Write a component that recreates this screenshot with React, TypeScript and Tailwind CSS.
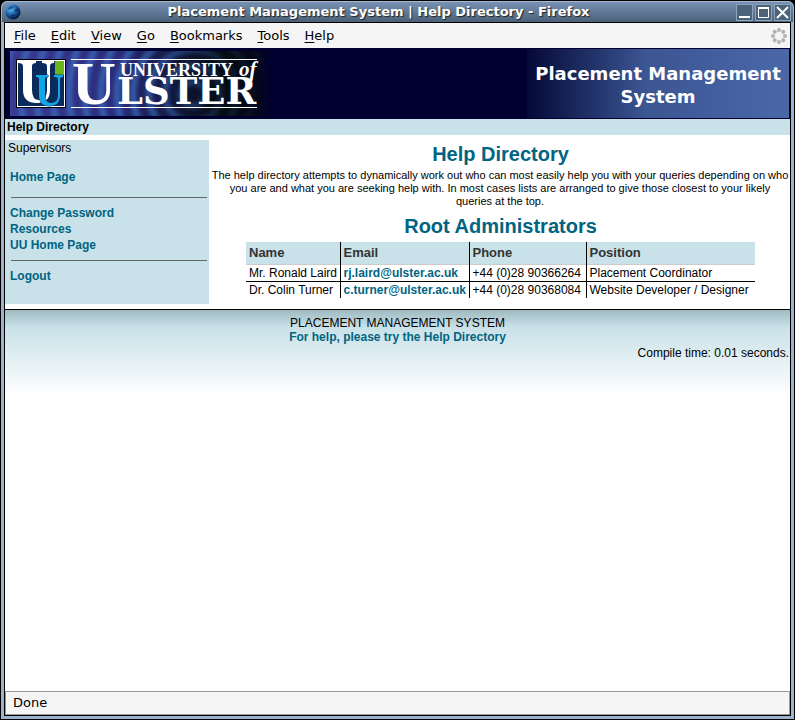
import React from "react";

const link = "font-bold text-[#006482] hover:underline";

const menu = ["File", "Edit", "View", "Go", "Bookmarks", "Tools", "Help"];

const people = [
  { name: "Mr. Ronald Laird", email: "rj.laird@ulster.ac.uk", phone: "+44 (0)28 90366264", position: "Placement Coordinator" },
  { name: "Dr. Colin Turner", email: "c.turner@ulster.ac.uk", phone: "+44 (0)28 90368084", position: "Website Developer / Designer" },
];

function Globe() {
  return (
    <svg className="size-4" viewBox="0 0 16 16" aria-hidden="true">
      <defs>
        <radialGradient id="globe" cx="0.35" cy="0.3" r="0.75">
          <stop offset="0" stopColor="#6cc4f4" />
          <stop offset="0.45" stopColor="#1f6bb4" />
          <stop offset="1" stopColor="#020b38" />
        </radialGradient>
      </defs>
      <circle cx="8" cy="8" r="7.5" fill="url(#globe)" />
      <path d="M3 4 6 2l3 1-2 2-3 1zM9 6l4-2 1 3-3 1zM7 10l3 1-1 3-3-2z" fill="#06225f" opacity=".6" />
    </svg>
  );
}

function Logo() {
  const rings = [12, 28, 44, 60, 76, 92, 108, 124, 140, 156, 172, 188];
  return (
    <svg className="h-[65px] w-[262px] shrink-0" viewBox="0 0 262 65" role="img" aria-label="University of Ulster">
      <defs>
        <linearGradient id="base" x1="0" x2="1" y1="0" y2="0">
          <stop offset="0" stopColor="#3a3a90" />
          <stop offset="0.4" stopColor="#2b2c7a" />
          <stop offset="0.62" stopColor="#12183f" />
          <stop offset="0.8" stopColor="#060c12" />
          <stop offset="0.94" stopColor="#040818" />
          <stop offset="1" stopColor="#000030" />
        </linearGradient>
        <linearGradient id="fade" x1="0" x2="1" y1="0" y2="0">
          <stop offset="0" stopColor="#aaa" />
          <stop offset="0.5" stopColor="#aaa" />
          <stop offset="0.8" stopColor="#333" />
          <stop offset="1" stopColor="#000" />
        </linearGradient>
        <mask id="ringMask"><rect width="262" height="65" fill="url(#fade)" /></mask>
        <filter id="soft"><feGaussianBlur stdDeviation="2" /></filter>
      </defs>
      <rect width="262" height="65" fill="url(#base)" />
      <g mask="url(#ringMask)">
        <g filter="url(#soft)" fill="none" stroke="#3d78cc" strokeWidth="6">
          {rings.map((r) => <circle key={r} cx="183" cy="43" r={r} />)}
        </g>
      </g>
      <rect x="6.500" y="8.500" width="49" height="48" fill="#fff" stroke="#000" />
      <rect x="8" y="10" width="46" height="45" fill="#0b2b5c" />
      <rect x="45" y="10" width="9" height="14" fill="#6ab51c" />
      <path d="M8 10H26V12Q22 12 22 15V39Q22 49 29 49Q37 49 37 39V15Q37 12 32 12V10H44V12Q40 12 40 15V39Q40 52 27 52Q13 52 13 39V15Q13 12 8 12Z" fill="#fff" />
      <path d="M26 24H38V26Q35 26 35 28V44Q35 52 41 52Q48 52 48 44V28Q48 26 44 26V24H53V26Q50 26 50 28V44Q50 55 39 55Q29 55 29 44V28Q29 26 26 26Z" fill="#15a4e4" stroke="#0b2b5c" strokeWidth="1" paintOrder="stroke" />
      <path d="M61 8.500H247M61 56.500H247" stroke="#fff" />
      <g fill="#fff" fontFamily="'Liberation Serif', serif" fontWeight="700">
        <text x="62" y="53" fontSize="61">U</text>
        <text x="110" y="25" fontSize="18">UNIVERSITY</text>
        <text x="229" y="25" fontSize="21" fontStyle="italic">of</text>
        <text x="107" y="53" fontSize="37" fontFamily="'DejaVu Serif', serif">LSTER</text>
      </g>
    </svg>
  );
}

function Throbber() {
  return (
    <svg className="size-4" viewBox="0 0 16 16" fill="#b2b2b2" aria-hidden="true">
      {[0, 45, 90, 135, 180, 225, 270, 315].map((a) => (
        <circle key={a} cx="8" cy="2" r="2" transform={`rotate(${a} 8 8)`} />
      ))}
    </svg>
  );
}

function WindowButton({ label, children }: { label: string; children: React.ReactNode }) {
  return (
    <button aria-label={label} className="size-[17px] border border-[#8ba5bf] bg-[#4d6379]">
      <svg className="block size-[15px]" viewBox="0 0 15 15" fill="none" stroke="#fff">{children}</svg>
    </button>
  );
}

export default function App() {
  return (
    <div className="flex min-h-screen flex-col border border-black bg-black font-['Liberation_Sans',Arial,sans-serif] text-xs text-black">
      <div className="flex flex-1 flex-col rounded-t-md border-x-3 border-b-3 border-[#9db2cc] bg-[#8299b2]">
        <header className="-mx-0.5 flex h-[21px] items-center rounded-t-md border-t border-[#a5b9d0] bg-linear-to-b from-[#7892b4] to-[#4b6178] pr-0.5 pl-[3px]">
          <Globe />
          <h1 className="flex-1 text-center font-['DejaVu_Sans',sans-serif] text-[13px] leading-5 font-bold text-white [text-shadow:1px_1px_1px_#222]">
            Placement Management System | Help Directory - Firefox
          </h1>
          <div className="flex gap-0.5">
            <WindowButton label="Minimize"><path d="M2 12h11" strokeWidth="2" /></WindowButton>
            <WindowButton label="Maximize"><path d="M2.500 2v10.500h10V2" /><path d="M2 3h11" strokeWidth="2" /></WindowButton>
            <WindowButton label="Close"><path d="m2 2 11 11M13 2 2 13" strokeWidth="2" /></WindowButton>
          </div>
        </header>

        <div className="flex flex-1 flex-col border border-black bg-white">
          <nav aria-label="Menu" className="flex h-[25px] items-center justify-between bg-[#f5f5f5] pr-[3px] pl-[9px] font-['DejaVu_Sans',sans-serif] text-[13px]">
            <div className="flex gap-[15px]">
              {menu.map((m) => (
                <button key={m}><span className="underline underline-offset-2">{m[0]}</span>{m.slice(1)}</button>
              ))}
            </div>
            <Throbber />
          </nav>

          <div className="flex h-[71px] items-center justify-between border border-[#000030] bg-[#000030] pl-1">
            <Logo />
            <h2 className="flex h-full w-[262px] items-center justify-center bg-linear-to-r from-[#070938] via-[#3c5593] via-45% to-[#4a68a8] pt-0.5 text-center font-['DejaVu_Sans',sans-serif] text-lg leading-[23px] font-bold text-white">
              Placement Management System
            </h2>
          </div>

          <div className="h-4 bg-[#c9e1e8] pl-0.5 leading-4 font-bold">Help Directory</div>

          <div className="flex gap-0.5 py-[5px]">
            <aside className="h-[164px] w-[204px] shrink-0 bg-[#c9e1e8] px-0.5 leading-4">
              <p className="pl-px">Supervisors</p>
              <ul className="mt-[13px] px-[3px]"><li><a href="#home" className={link}>Home Page</a></li></ul>
              <hr className="mt-3 ml-1 border-[#666]" />
              <ul className="mt-[7px] px-[3px]">
                <li><a href="#password" className={link}>Change Password</a></li>
                <li><a href="#resources" className={link}>Resources</a></li>
                <li><a href="#uu" className={link}>UU Home Page</a></li>
              </ul>
              <hr className="mt-[7px] ml-1 border-[#666]" />
              <ul className="mt-[7px] px-[3px]"><li><a href="#logout" className={link}>Logout</a></li></ul>
            </aside>

            <main className="min-w-0 flex-1 text-center">
              <h2 className="pt-0.5 text-xl leading-6 font-bold text-[#006482]">Help Directory</h2>
              <p className="mt-[3px] pr-px text-[11px] leading-[13px]">
                The help directory attempts to dynamically work out who can most easily help you with your queries depending on who you are and what you are seeking help with. In most cases lists are arranged to give those closest to your likely queries at the top.
              </p>
              <h2 className="mt-1.5 text-xl leading-6 font-bold text-[#006482]">Root Administrators</h2>
              <table className="mx-auto mt-1 border-collapse text-left whitespace-nowrap">
                <thead>
                  <tr className="h-[22px] border-b border-[#ccc] bg-[#c9e1e8] text-[13px] text-[#333]">
                    {["Name", "Email", "Phone", "Position"].map((h) => (
                      <th key={h} className="border-l border-black px-[3px] py-0 first:border-l-0">{h}</th>
                    ))}
                  </tr>
                </thead>
                <tbody className="leading-4">
                  {people.map((p) => (
                    <tr key={p.email} className="border-b border-black last:border-b-0">
                      <td className="min-w-[94px] pr-px pl-[3px]">{p.name}</td>
                      <td className="min-w-[129px] border-l border-black pr-px pl-[3px]"><a href={`mailto:${p.email}`} className={link}>{p.email}</a></td>
                      <td className="min-w-[117px] border-l border-black pr-px pl-[3px]">{p.phone}</td>
                      <td className="min-w-[169px] border-l border-black pl-[3px]">{p.position}</td>
                    </tr>
                  ))}
                </tbody>
              </table>
            </main>
          </div>

          <footer className="h-[87px] border-t border-black bg-linear-to-b from-[#9fbac1] via-[#c9e1e8] via-20% to-white pt-1.5 text-center leading-[14px]">
            <p>PLACEMENT MANAGEMENT SYSTEM</p>
            <p><a href="#help" className={link}>For help, please try the Help Directory</a></p>
            <p className="mt-0.5 pr-px text-right">Compile time: 0.01 seconds.</p>
          </footer>

          <div className="flex-1" />
          <div role="status" className="h-6 border border-[#999] bg-[#f5f5f5] pl-[7px] font-['DejaVu_Sans',sans-serif] text-[13px] leading-[22px]">Done</div>
        </div>
      </div>
    </div>
  );
}
